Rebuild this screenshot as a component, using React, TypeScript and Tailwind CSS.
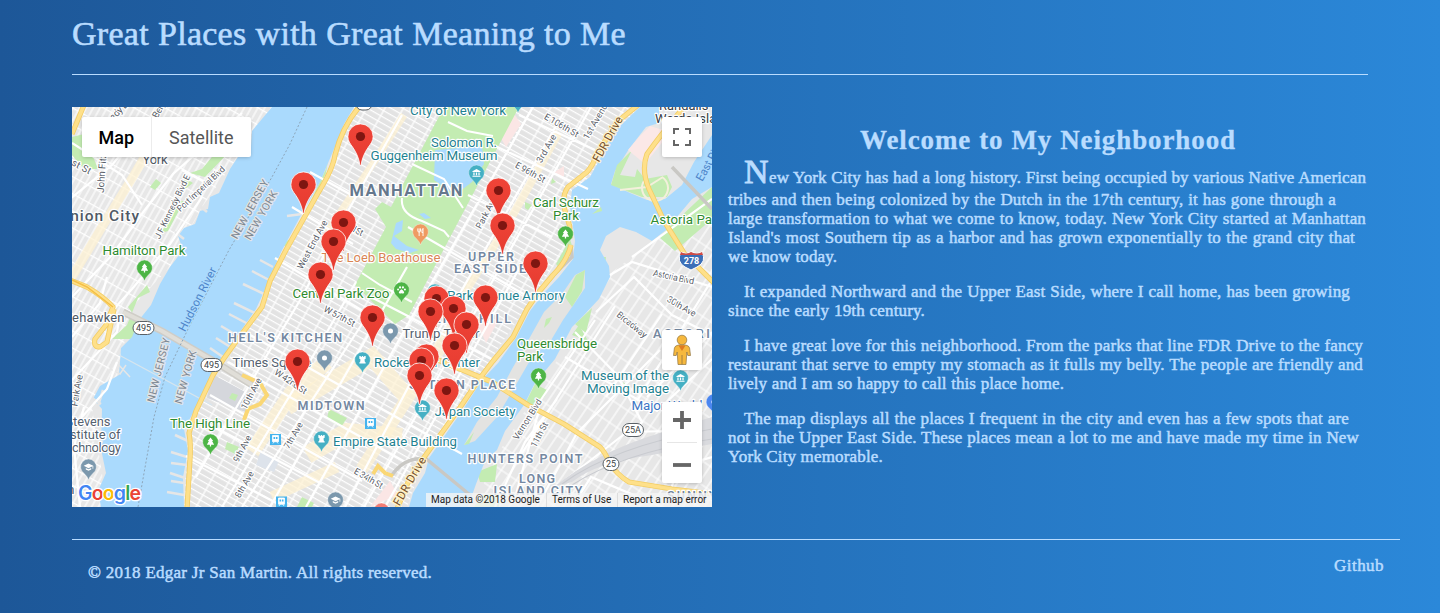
import React from "react";

type LabelSpec = {
  t: string;
  x: number;
  y: number;
  w: number;
  s?: number;
  c?: string;
  r?: number;
  b?: number;
  halo?: string;
};

const TEAL = "#1f8291";
const GREEN = "#2e8b2f";
const SLATE = "#54616f";
const AREA = "#7488a1";
const ROAD = "#5a6068";

// Every label is centred on (x, y) and fitted to a width of w.
const labels: LabelSpec[] = [
  { t: "Union City", x: 27, y: 114, w: 80, s: 15.5, c: "#4f5965", b: 500 },
  { t: "West New", x: 85, y: 41, w: 60, s: 13, c: "#4f5965" },
  { t: "York", x: 83, y: 57, w: 25, s: 13, c: "#4f5965" },
  { t: "Hamilton Park", x: 72, y: 148, w: 83, s: 13.4, c: GREEN },
  { t: "41st St", x: 3, y: 60, w: 32, s: 9.8, c: ROAD, r: 28 },
  { t: "John Fitzgerald", x: 34, y: 53, w: 66, s: 9.8, c: ROAD, r: -86 },
  { t: "J F Kennedy Blvd E", x: 103, y: 101, w: 70, s: 8.8, c: ROAD, r: -64 },
  { t: "Port Imperial Blvd", x: 131, y: 84, w: 62, s: 8.8, c: ROAD, r: -43 },
  { t: "Kennedy Blvd", x: 46, y: 9, w: 54, s: 9.5, c: ROAD, r: -45 },
  { t: "Bergenline", x: 95, y: -6, w: 40, s: 9.5, c: ROAD, r: -62 },
  { t: "NEW JERSEY", x: 181, y: 104, w: 66, s: 10.5, c: "#7c8792", r: -61, halo: "#e3e5e8" },
  { t: "NEW YORK", x: 192, y: 110, w: 55, s: 10.5, c: "#7c8792", r: -60, halo: "#e3e5e8" },
  { t: "NEW JERSEY", x: 90, y: 264, w: 66, s: 10.5, c: "#7c8792", r: -76, halo: "#e3e5e8" },
  { t: "NEW YORK", x: 117, y: 271, w: 55, s: 10.5, c: "#7c8792", r: -74, halo: "#e3e5e8" },
  { t: "Hudson River", x: 129, y: 194, w: 70, s: 11.5, c: "#4d84c9", r: -63, halo: "#aadafd" },
  { t: "Weehawken", x: 17, y: 215, w: 71, s: 13, c: "#4f5965" },
  { t: "Park Ave", x: 8, y: 284, w: 32, s: 9.5, c: ROAD, r: -80 },
  { t: "Stevens", x: 16, y: 319, w: 45, s: 13, c: SLATE },
  { t: "Institute of", x: 18, y: 332, w: 61, s: 13, c: SLATE },
  { t: "Technology", x: 18, y: 345, w: 62, s: 13, c: SLATE },
  { t: "Hoboken", x: -22, y: 387, w: 49, s: 13, c: "#4f5965" },
  { t: "The High Line", x: 138, y: 321, w: 80, s: 13.4, c: GREEN },
  { t: "HELL'S KITCHEN", x: 213, y: 235, w: 114, s: 12.5, c: AREA, b: 600 },
  { t: "Times Square", x: 200, y: 260, w: 79, s: 13.2, c: SLATE },
  { t: "W 42nd St", x: 217, y: 277, w: 37, s: 9, c: ROAD, r: 34 },
  { t: "W 57th St", x: 266, y: 212, w: 34, s: 9, c: ROAD, r: 28 },
  { t: "10th Ave", x: 182, y: 288, w: 34, s: 9, c: ROAD, r: -62 },
  { t: "9th Ave", x: 173, y: 343, w: 29, s: 9, c: ROAD, r: -62 },
  { t: "8th Ave", x: 175, y: 379, w: 29, s: 9, c: ROAD, r: -60 },
  { t: "7th Ave", x: 224, y: 330, w: 29, s: 9, c: ROAD, r: -60 },
  { t: "West End Ave", x: 243, y: 139, w: 54, s: 9, c: ROAD, r: -62 },
  { t: "W 72nd St", x: 274, y: 121, w: 35, s: 9, c: ROAD, r: 28 },
  { t: "MIDTOWN", x: 259, y: 303, w: 67, s: 12.5, c: AREA, b: 600 },
  { t: "Empire State Building", x: 323, y: 339, w: 124, s: 13.2, c: TEAL },
  { t: "Rockefeller Center", x: 355, y: 260, w: 106, s: 13.2, c: TEAL },
  { t: "Trump Tower", x: 369, y: 231, w: 77, s: 13.2, c: SLATE },
  { t: "Japan Society", x: 403, y: 309, w: 81, s: 13.2, c: TEAL },
  { t: "SUTTON PLACE", x: 390, y: 282, w: 106, s: 12.5, c: AREA, b: 600 },
  { t: "LENOX HILL", x: 396, y: 216, w: 86, s: 12.5, c: AREA, b: 600 },
  { t: "E 34th St", x: 295, y: 374, w: 32, s: 9, c: ROAD, r: 30 },
  { t: "FDR Drive", x: 341, y: 376, w: 54, s: 11.5, c: "#75502b", r: -60, halo: "#fff2cb" },
  { t: "MANHATTAN", x: 334, y: 89, w: 113, s: 16.5, c: "#65788d", b: 700 },
  { t: "City of New York", x: 386, y: 8, w: 96, s: 13.4, c: TEAL },
  { t: "Solomon R.", x: 392, y: 40, w: 66, s: 13.4, c: TEAL },
  { t: "Guggenheim Museum", x: 362, y: 53, w: 127, s: 13.4, c: TEAL },
  { t: "The Loeb Boathouse", x: 309, y: 155, w: 119, s: 13.2, c: "#d98555" },
  { t: "Central Park Zoo", x: 269, y: 191, w: 97, s: 13.4, c: GREEN },
  { t: "Park Avenue Armory", x: 434, y: 193, w: 118, s: 13.2, c: TEAL },
  { t: "UPPER", x: 419, y: 154, w: 46, s: 12.5, c: AREA, b: 600 },
  { t: "EAST SIDE", x: 418, y: 166, w: 72, s: 12.5, c: AREA, b: 600 },
  { t: "Park Ave", x: 417, y: 107, w: 35, s: 9, c: ROAD, r: -62 },
  { t: "3rd Ave", x: 477, y: 43, w: 31, s: 9, c: ROAD, r: -60 },
  { t: "1st Avenue", x: 527, y: 14, w: 44, s: 9, c: ROAD, r: -60 },
  { t: "E 106th St", x: 488, y: 21, w: 38, s: 9, c: ROAD, r: 30 },
  { t: "E 96th St", x: 457, y: 68, w: 33, s: 9, c: ROAD, r: 29 },
  { t: "FDR Drive", x: 539, y: 34, w: 50, s: 11.5, c: "#75502b", r: -61, halo: "#fff2cb" },
  { t: "Carl Schurz", x: 494, y: 100, w: 66, s: 13.4, c: GREEN },
  { t: "Park", x: 494, y: 113, w: 26, s: 13.4, c: GREEN },
  { t: "Randalls and", x: 624, y: 3, w: 74, s: 13, c: "#383d44" },
  { t: "Wards Island", x: 621, y: 16, w: 76, s: 13, c: "#383d44" },
  { t: "Astoria Park", x: 615, y: 117, w: 73, s: 13.4, c: GREEN },
  { t: "East River", x: 642, y: 54, w: 48, s: 11.5, c: "#4d84c9", r: -61, halo: "#aadafd" },
  { t: "Astoria Blvd", x: 601, y: 173, w: 42, s: 9, c: ROAD, r: 12 },
  { t: "30th Ave", x: 608, y: 202, w: 32, s: 9, c: ROAD, r: 30 },
  { t: "Broadway", x: 558, y: 220, w: 36, s: 9, c: ROAD, r: 39 },
  { t: "ASTORIA", x: 615, y: 231, w: 68, s: 12.5, c: AREA, b: 600 },
  { t: "Queensbridge", x: 485, y: 241, w: 80, s: 13.4, c: GREEN },
  { t: "Park", x: 458, y: 254, w: 26, s: 13.4, c: GREEN },
  { t: "Museum of the", x: 553, y: 273, w: 88, s: 13.4, c: TEAL },
  { t: "Moving Image", x: 556, y: 286, w: 82, s: 13.4, c: TEAL },
  { t: "Major World", x: 595, y: 303, w: 71, s: 13.4, c: "#3c74c4" },
  { t: "Vernon Blvd", x: 458, y: 314, w: 46, s: 9, c: ROAD, r: -58 },
  { t: "11th St", x: 470, y: 329, w: 27, s: 9, c: ROAD, r: -62 },
  { t: "HUNTERS POINT", x: 453, y: 356, w: 115, s: 12.5, c: AREA, b: 600 },
  { t: "LONG", x: 465, y: 376, w: 36, s: 12.5, c: AREA, b: 600 },
  { t: "ISLAND CITY", x: 466, y: 388, w: 89, s: 12.5, c: AREA, b: 600 },
  { t: "SUNNYSIDE", x: 637, y: 393, w: 84, s: 12.5, c: AREA, b: 600 },
];

function Label({ t, x, y, w, s = 12, c, r = 0, b = 400, halo = "#ffffff" }: LabelSpec) {
  return (
    <text
      transform={`translate(${x} ${y}) rotate(${r})`}
      textAnchor="middle"
      textLength={w}
      fontSize={s}
      fontWeight={b}
      fill={c}
      stroke={halo}
      strokeWidth={2.4}
      strokeLinejoin="round"
      paintOrder="stroke"
    >
      {t}
    </text>
  );
}

type Glyph = "tree" | "museum" | "castle" | "dot" | "food" | "paw" | "cap" | "none";

function GlyphMark({ k }: { k: Glyph }) {
  switch (k) {
    case "tree":
      return <path d="M0-5 3-1H1.8L4 3H.7V5H-.7V3H-4L-1.8-1H-3Z" fill="#fff" />;
    case "museum":
      return (
        <path d="M0-4.5 4.5-2V-1H-4.5V-2ZM-3.5-.5h1.4v3h-1.4ZM-.7-.5H.7v3H-.7ZM2.1-.5h1.4v3H2.1ZM-4.5 3h9v1.2h-9Z" fill="#fff" />
      );
    case "castle":
      return <path d="M-3.5-4.5h1.6v1.2h1.1v-1.2H.8v1.2h1.1v-1.2h1.6v3L2.2-.6 2.7 2.5H3.5V4h-7V2.5h.8L-2.2-.6-3.5-1.5Z" fill="#fff" />;
    case "food":
      return <path d="M-3-4v3q0 1 1.5 1Q0 0 0-1v-3M-1.5-4V4.5M2.8 4.5V-4Q1.3-3 1.5.6h1.3" fill="none" stroke="#fff" strokeWidth="1" />;
    case "paw":
      return (
        <g fill="#fff">
          <path d="M0-.7Q2 .3 3 2.5 3 4.5 0 3.6-3 4.5-3 2.5-2 .3 0-.7Z" />
          <circle cx="-3.8" cy="-.6" r="1.1" />
          <circle cx="-1.6" cy="-2.9" r="1.2" />
          <circle cx="1.6" cy="-2.9" r="1.2" />
          <circle cx="3.8" cy="-.6" r="1.1" />
        </g>
      );
    case "cap":
      return <path d="M0-4 5.3-1.3V2H4.5V-.8L0 1.3-5.3-1.3ZM-3 1 0 2.4 3 1V2.8L0 4.2-3 2.8Z" fill="#fff" />;
    case "dot":
      return <circle r="2.8" fill="#fff" />;
    default:
      return null;
  }
}

const places: { x: number; y: number; c: string; k: Glyph }[] = [
  { x: 72.5, y: 161, c: "#4db546", k: "tree" },
  { x: 138.5, y: 335, c: "#4db546", k: "tree" },
  { x: 493.5, y: 127, c: "#4db546", k: "tree" },
  { x: 466.5, y: 269, c: "#4db546", k: "tree" },
  { x: 329.5, y: 183, c: "#4db546", k: "paw" },
  { x: 348.5, y: 125, c: "#ef9a62", k: "food" },
  { x: 404.5, y: 66, c: "#45b0c4", k: "museum" },
  { x: 446, y: -7, c: "#45b0c4", k: "museum" },
  { x: 363, y: 185, c: "#45b0c4", k: "museum" },
  { x: 350.5, y: 301, c: "#45b0c4", k: "museum" },
  { x: 608.5, y: 271, c: "#45b0c4", k: "museum" },
  { x: 290.5, y: 253, c: "#45b0c4", k: "castle" },
  { x: 249.5, y: 332, c: "#45b0c4", k: "castle" },
  { x: 252.5, y: 251, c: "#7b98ad", k: "dot" },
  { x: 318.5, y: 224, c: "#7b98ad", k: "dot" },
  { x: 16.5, y: 360, c: "#7b98ad", k: "cap" },
  { x: 263.5, y: 393, c: "#7b98ad", k: "cap" },
  { x: 309.5, y: 404, c: "#f07c74", k: "none" },
  { x: 642, y: 295, c: "#4a86f0", k: "dot" },
];

const pins: [number, number][] = [
  [288.5, 29.5],
  [231.5, 77.5],
  [426.5, 83.5],
  [271.5, 115.5],
  [430.5, 118.5],
  [261.5, 134.5],
  [463.5, 156.5],
  [248.5, 167.5],
  [413.5, 190.5],
  [364.5, 191.5],
  [381.5, 201.5],
  [358.5, 204.5],
  [300.5, 210.5],
  [394.5, 217.5],
  [382.5, 238.5],
  [354.5, 249.5],
  [349.5, 253.5],
  [225.5, 254.5],
  [347.5, 268.5],
  [374.5, 283.5],
];

const shields: [number, number, string][] = [
  [71.5, 221, "495"],
  [139.5, 258, "495"],
  [561, 323, "25A"],
  [539, 357, "25"],
];

const stations: [number, number][] = [
  [203.5, 332.5],
  [298.5, 316.5],
  [209.5, 395],
];

const freeways = [
  "M115 402 118 352Q119 336 117 326L124 304 141 268Q151 252 166 232L190 200 198 174 214 143 246 86Q261 62 263 48 270 20 287 0",
  "M325 402 337 373 353 349 387 302 408 271 421 254 441 230 455 202 466 186 481 168Q495 154 499 138",
  "M498 131Q499 120 495 110 488 91 496 80L515 65Q522 57 524 48L545 15 566-2",
  "M612 0Q590 26 575 47 569 63 577 82L592 114 612 146 642 176",
  "M356 249 420 275 456 298 492 317 528 340Q533 345 537 355 545 368 557 375L600 382 642 387",
  "M-2 173 15 180Q32 190 41 200L34 218 23 232Q21 240 28 240L35 235 42 202",
  "M12-2 0 27",
];

const majorStreets =
  "M-2 92 40 58 88 0M0 190 40 148 72 104 101 67 170 6M0 36 50 68 70 98M110 63 138 78M42 202 60 182 98 137 130 90M0 230 28 196 35 170M0 273 45 225 48 207M10 310 35 282 45 255M8 400 2 340 12 300M124 370 189 258 230 190 267 120 330 8M150 400 220 285 284 175M170 400 292 214M198 400 335 160M234 400 337 215 461 0M273 400 360 235 492 5M292 400 403 205 519 0M313 400 385 272 448 160M238 65 283 90M220 100 281 137M203 151 291 204M173 225 390 347M156 255 335 356M138 288 290 374M299 190 423 254M336 120 455 189M396 88 480 130M421 38 516 82M447 8 523 43M129 313 250 377M114 349 220 404M538 168 560 155 640 180M524 205 562 170 600 208 640 228M503 225 545 268 570 315 554 330M493 250 585 304 640 252M462 303 500 247 523 213M445 354 492 280 543 199M423 400 453 335 485 292M465 400 505 326 588 243M484 380 555 325 640 323M500 400 519 370 590 400M590 207 534 290M638 176 565 294M596 392 606 360 640 350M560 150 640 92M575 290 640 225M443 391 467 303";

function BaseMap() {
  return (
    <svg className="block h-[400px] w-[640px] font-['Roboto',sans-serif]" viewBox="0 0 640 400">
      <defs>
        <pattern id="manhattan" width="16" height="5.8" patternUnits="userSpaceOnUse" patternTransform="rotate(29.5)">
          <rect width="16" height="5.8" fill="#e3e3e3" />
          <path d="M0 .6H16M1 0V6" stroke="#fff" strokeWidth="1.3" />
        </pattern>
        <pattern id="jersey" width="6" height="15" patternUnits="userSpaceOnUse" patternTransform="rotate(29)">
          <rect width="6" height="15" fill="#e7e7e7" />
          <path d="M0 .6H6M1 0V15" stroke="#fff" strokeWidth="1.2" />
        </pattern>
        <pattern id="queens" width="9" height="20" patternUnits="userSpaceOnUse" patternTransform="rotate(34)">
          <rect width="9" height="20" fill="#e7e7e7" />
          <path d="M0 1H9M1 0V20" stroke="#fff" strokeWidth="1.2" />
        </pattern>
        <linearGradient id="beak" x1="0" x2="0" y1="0" y2="1">
          <stop offset="0" stopColor="#f04438" />
          <stop offset="1" stopColor="#e53b30" />
        </linearGradient>
      </defs>

      <rect width="640" height="400" fill="#e7e7e7" />
      <path d="M0 0H205L180 30 130 100 98 160 60 200 45 270 20 300 35 400H0Z" fill="url(#jersey)" />
      <path d="M282 0H566L520 65 498 135 353 350 335 400H112L116 322 187 200 262 50Z" fill="url(#manhattan)" />
      <path d="M640 85 600 120 540 165 500 230 430 340 400 400H640Z" fill="url(#queens)" />

      {/* Commercial corridors */}
      <g stroke="#fdf1d3" strokeOpacity=".75" fill="none">
        <path d="M0 170 30 120 62 68 90 20" strokeWidth="9" />
        <path d="M255 125 302 55 332 8" strokeWidth="7" />
        <path d="M180 345 220 285 255 255" strokeWidth="15" />
        <path d="M215 300 300 250 335 290" strokeWidth="17" />
        <path d="M235 348 275 325 330 330" strokeWidth="18" />
        <path d="M290 362 350 268 385 215" strokeWidth="13" />
        <path d="M390 190 437 115 487 25" strokeWidth="8" />
        <path d="M200 390 265 360" strokeWidth="11" />
      </g>
      <path d="M427 28 441 5 449 17 434 40ZM481 66 492 59 492 70ZM405 215 427 212 414 236ZM298 400 318 374 326 388Z" fill="#fbe6e5" />
      <path d="M140 267 177 287 176 306 135 291Z" fill="#d5d7dc" />
      <path d="M189 344 207 354 202 365 184 358Z" fill="#dde3eb" />

      {/* Parks */}
      <g fill="#c3ecb2">
        <path d="M372 0H447L337 208 323 217 283 178 314 120 303 102 310 95 319 100Z" />
        <path d="M0 30 12 27 26 62 12 62 0 48ZM118 66 133 70 157 45 150 38 130 62ZM84 72 89 76 83 83 78 80ZM113 71 121 76 113 82 109 78ZM106 94 112 94 96 124 89 126ZM66 191 78 185 75 178 56 200 65 212 63 232 40 232 55 218Z" />
        <path d="M209 138 222 129 254 62 258 40 254 66 234 107 217 140ZM257 302 275 311 269 320 255 312ZM160 286 166 288 163 294 157 291ZM155 335 167 340 163 347 153 342ZM230 390 242 396 240 400H225Z" />
        <path d="M498 132 501 142 489 163 484 157ZM453 95 460 98 456 103 453 101ZM480 71 484 75 479 77Z" />
        <path d="M529 150 534 150 533 158 526 158ZM453 297 463 277 475 283 473 289 460 304ZM587 130 640 80V112L603 144ZM503 217 520 201 514 226ZM405 365 425 357 423 375 408 375ZM410 388 428 387 427 400H402Z" />
        <path d="M551 275 558 280 555 285ZM500 228 516 234 507 218Z" />
      </g>
      <path d="M363 43 410 39 412 57 400 75 383 88 362 73ZM347 107 352 106 359 111 353 112ZM331 113 330 124 322 129 335 139 347 143 338 146 324 142 319 136 324 116Z" fill="#aadafd" />
      <g fill="none" stroke="#fff" strokeWidth="2">
        <path d="M340 57 372 72 391 101M330 91Q328 107 350 114L372 124 377 130M290 166 308 178 340 195M376 15 395 24 421 29" />
      </g>

      {/* Rivers */}
      <path
        d="M200 0 180 24 179 40 168 47 158 62 147 86 138 90 136 102 128 104 123 117 112 121 106 129 111 143 98 160 88 177 79 198 67 213 60 230 49 241 47 268 28 279 21 292 30 302 29 342 34 366 26 384 29 400H112L111 370 116 344 112 322 125 299 141 266 153 249 168 225 184 202 196 176 209 145 228 110 248 75 262 42 272 17 282 0Z"
        fill="#aadafd"
      />
      <path
        d="M568 0H587V16L574 20 557 42 543 64 539 77 558 86 575 93 593 92 610 78 622 55 640 28V80L620 92 594 123 580 134 564 125 548 120 534 129 528 143 537 159 538 170 527 192 512 208 500 220 483 252 463 276 452 298 433 324 425 343 413 354 404 377 396 400H337L341 386 353 366 357 351 390 304 410 273 426 256 444 231 458 204 471 187 487 170 501 152 503 134 498 100 500 83 518 70 528 52 544 23Z"
        fill="#aadafd"
      />
      <path d="M513 163 503 168 490 187 472 205 457 232 440 262 425 290 405 315 392 338 403 334 425 310 445 276 460 250 478 235 491 213 500 200 513 181Z" fill="#e3e3e1" />
      <path d="M513 163 504 168 493 190 500 200 510 184ZM472 221 477 216 480 210 474 212ZM402 325 392 338 397 337ZM520 107 529 100 530 104ZM560 43 545 58 539 78 570 90 595 90 600 80 595 68 573 72 565 62 563 70 548 68Z" fill="#c3ecb2" />
      <path d="M567 30 578 19 591 23 596 28 573 57 556 43Z" fill="#fbe8e7" />
      <path d="M590 70A13 13 0 1 1 572 74M548 83 575 80 591 70" fill="none" stroke="#f4f0dc" strokeWidth="2" />

      {/* Piers */}
      <g stroke="#e6e6e6" strokeWidth="2.5" fill="none">
        <path d="M188 153 201 160M180 164 199 174M171 177 192 187M162 196 187 208M157 207 180 219M149 219 171 232M144 231 160 241M138 241 151 250M215 109 230 107M128 99 135 105M103 125 112 132M103 328 116 334M99 345 115 350M99 356 115 358M98 366 113 371M99 374 112 376M95 385 112 388M29 297 20 291M20 314 31 316M21 333 31 335M31 283 25 302" />
        <path d="M44 255 58 270M41 253 38 262 48 267 54 258" strokeWidth="1.5" />
      </g>

      <path d={majorStreets} fill="none" stroke="#fff" strokeWidth="2.2" />
      <path d="M47 248 140 298" stroke="#d6e5ee" strokeWidth="1.4" />

      {/* Rail yards, tunnels and elevated roads */}
      <path d="M482 380Q525 345 588 326L640 310V337L580 348Q525 355 500 375Z" fill="#d9dade" />
      <path d="M490 377Q540 340 640 322M500 378Q550 346 640 332" fill="none" stroke="#c9cbd0" strokeWidth="1.2" />
      <path d="M51 205 90 224 140 253 180 278" fill="none" stroke="#cfcdc7" strokeWidth="7" />
      <path d="M51 205 90 224 140 253 180 278" fill="none" stroke="#e0ded8" strokeWidth="4" />
      <path d="M352 350 398 388M320 368Q333 350 352 352M499 138 500 150 474 175M600 60 640 102" fill="none" stroke="#c9c8c4" strokeWidth="3.5" />
      <path d="M170 268 188 276 195 288 188 297 176 302 172 313M301 367 306 359 313 366 321 369" fill="none" stroke="#fad775" strokeWidth="4" />

      {freeways.map((d) => (
        <path key={d} d={d} fill="none" stroke="#f3cd64" strokeWidth="5.2" strokeLinejoin="round" />
      ))}
      {freeways.map((d) => (
        <path key={d} d={d} fill="none" stroke="#fee08a" strokeWidth="3.6" strokeLinejoin="round" />
      ))}
      <path d="M0 173 15 180 41 200" stroke="#f5bf45" strokeWidth="1.5" fill="none" />

      <path d="M235 0 218 37 200 70 157 143 117 220 93 270 82 310 66 400" fill="none" stroke="#8da6ba" strokeWidth="1" strokeDasharray="2 2" />

      <rect x="284" y="-9" width="16" height="12" rx="6" fill="#fff" stroke="#596066" />
      {shields.map(([x, y, t]) => (
        <g key={`${x}-${y}`}>
          <rect x={x - (t.length > 2 ? 10.5 : 8)} y={y - 6.5} width={t.length > 2 ? 21 : 16} height="13" rx="6.5" fill="#fff" stroke="#596066" />
          <text x={x} y={y + 3.4} textAnchor="middle" fontSize="9" fill="#3a3f44">
            {t}
          </text>
        </g>
      ))}
      <path d="M609 145Q614 148 619 145 625 148 630 145 635 155 625 160L619 163 613 160Q604 155 609 145Z" transform="translate(0 -34)" fill="none" />
      <path d="M609 111Q614 114 619 111 625 114 630 111 635 121 625 126L619 129 613 126Q604 121 609 111Z" transform="translate(0 34)" fill="#3c6fb7" stroke="#fff" />
      <path d="M609 145Q614 148 619 145 625 148 630 145L631 148H608Z" fill="#d24b44" />
      <text x="619.5" y="157" textAnchor="middle" fontSize="9" fontWeight="700" fill="#fff">
        278
      </text>

      {labels.map((l) => (
        <Label key={`${l.t}-${l.x}-${l.y}`} {...l} />
      ))}

      {stations.map(([x, y]) => (
        <g key={`${x}-${y}`} transform={`translate(${x} ${y})`}>
          <rect x="-5.5" y="-5.5" width="11" height="11" fill="#45b4ee" />
          <path d="M-3-4H3V2.2H-3ZM-2.6 4-1.2 2.2M2.6 4 1.2 2.2" fill="#fff" stroke="#fff" strokeWidth=".8" />
          <path d="M-2-2.6H-.4V-.4H-2ZM.4-2.6H2V-.4H.4Z" fill="#45b4ee" />
        </g>
      ))}

      {places.map((p) => (
        <g key={`${p.x}-${p.y}`} transform={`translate(${p.x} ${p.y})`}>
          <path d="M0 12.8Q-1 9.5-4.3 6.4A7.8 7.8 0 1 1 4.3 6.4Q1 9.5 0 12.8Z" fill={p.c} stroke="#fff" strokeOpacity=".5" strokeWidth=".6" />
          <g transform="scale(.9)">
            <GlyphMark k={p.k} />
          </g>
        </g>
      ))}

      {pins.map(([x, y]) => (
        <g key={`${x}-${y}`} transform={`translate(${x} ${y})`}>
          <path
            d="M-.5 29C-1.6 21.5-4 16.5-7.6 11-10.6 6.8-12.6 4.4-12.6 0A12.6 12.6 0 0 1 12.6 0C12.6 4.4 10.6 6.8 7.6 11 4 16.5 1.6 21.5 .5 29Z"
            fill="url(#beak)"
            stroke="#fff"
            strokeWidth=".8"
          />
          <circle r="4.6" fill="#7e1611" />
        </g>
      ))}
    </svg>
  );
}

function Pegman() {
  return (
    <svg className="h-8 w-6" viewBox="0 0 24 32">
      <g fill="#f6b83d" stroke="#8f7442" strokeWidth=".7">
        <path d="M8.5 11H15.5Q19 11.5 19.6 14L20.5 21.5H17.8L16.8 18 16 30.5H8L7.2 18 6.2 21.5H3.5L4.4 14Q5 11.5 8.5 11Z" />
        <circle cx="12" cy="6" r="4.8" />
      </g>
      <path d="M8.5 11.4H15.5L12 17Z" fill="#e07a20" />
      <path d="M12 21V30.5" stroke="#8f7442" strokeWidth=".8" />
    </svg>
  );
}

function MapPanel() {
  return (
    <div className="relative h-[400px] w-[640px] shrink-0 overflow-hidden bg-[#e7e7e7] font-['Roboto',sans-serif]">
      <BaseMap />

      <div className="absolute top-2.5 left-2.5 flex h-10 rounded-xs bg-white text-[18px] shadow-[0_1px_4px_-1px_rgba(0,0,0,0.3)]">
        <button className="w-[69.5px] border-r border-[#ececec] font-medium text-black">Map</button>
        <button className="w-[99.5px] text-[#565656]">Satellite</button>
      </div>

      <div className="absolute top-2.5 right-2.5 flex size-10 items-center justify-center rounded-xs bg-white shadow-[0_1px_4px_-1px_rgba(0,0,0,0.3)]">
        <svg className="size-[18px]" viewBox="0 0 18 18" fill="none" stroke="#666" strokeWidth="2">
          <path d="M1 6V1H6M12 1H17V6M17 12V17H12M6 17H1V12" />
        </svg>
      </div>

      <div className="absolute top-[223px] right-2.5 flex size-10 items-center justify-center rounded-xs bg-white shadow-[0_1px_4px_-1px_rgba(0,0,0,0.3)]">
        <Pegman />
      </div>

      <div className="absolute top-[295px] right-2.5 flex h-[81px] w-10 flex-col items-center rounded-xs bg-white shadow-[0_1px_4px_-1px_rgba(0,0,0,0.3)]">
        <svg className="h-10 w-[18px]" viewBox="0 0 18 40" stroke="#666" strokeWidth="3.8">
          <path d="M0 18H18M9 9V27" />
        </svg>
        <div className="h-px w-[30px] bg-[#e6e6e6]" />
        <svg className="h-10 w-[18px]" viewBox="0 0 18 40" stroke="#666" strokeWidth="3.8">
          <path d="M0 22H18" />
        </svg>
      </div>

      <svg className="absolute bottom-0 left-1 h-7 w-[68px] font-['Inter',sans-serif]" viewBox="0 0 68 28">
        <text x="2" y="21" fontSize="19.5" fontWeight="600" textLength="63" stroke="#fff" strokeWidth="2.5" strokeLinejoin="round" paintOrder="stroke">
          <tspan fill="#4285f4">G</tspan>
          <tspan fill="#ea4335">o</tspan>
          <tspan fill="#fbbc05">o</tspan>
          <tspan fill="#4285f4">g</tspan>
          <tspan fill="#34a853">l</tspan>
          <tspan fill="#ea4335">e</tspan>
        </text>
      </svg>

      <div className="absolute right-0 bottom-0 flex h-3.5 items-center bg-[#f5f5f5]/80 text-[10px] leading-[14px] whitespace-nowrap text-[#222]">
        <span className="w-[120px] pl-[5px]">Map data ©2018 Google</span>
        <span className="w-[71px] border-l border-[#ddd] pl-[5px]">Terms of Use</span>
        <span className="w-[95px] border-l border-[#ddd] pl-[5px]">Report a map error</span>
      </div>
    </div>
  );
}

function Line({ w, indent = false, children }: { w: string; indent?: boolean; children: React.ReactNode }) {
  return (
    <span className={`block h-[19px] whitespace-nowrap [text-align-last:justify] ${indent ? "ml-4" : ""} ${w}`}>{children}</span>
  );
}

export default function App() {
  return (
    <div className="h-[613px] overflow-hidden bg-[linear-gradient(to_right,#1d5798,#2b88d9)] pl-[72px] font-['Liberation_Serif',serif] text-[#b9dcff]">
      <header className="mr-[72px] h-[75px] border-b border-[#b9dcff] pt-[13px]">
        <h1 className="w-[554px] text-[34px] leading-[42px] tracking-[0.28px] whitespace-nowrap [-webkit-text-stroke:0.6px] [text-align-last:justify]">
          Great Places with Great Meaning to Me
        </h1>
      </header>

      <main className="mt-8 flex h-[400px] gap-4">
        <MapPanel />
        <article className="w-[640px] pt-[15px] text-[17px] leading-[19px] tracking-[0.16px] [-webkit-text-stroke:0.5px]">
          <h2 className="mx-auto h-9 w-[376px] text-[27px] leading-9 font-bold tracking-[0.9px] whitespace-nowrap [-webkit-text-stroke:0.3px] [text-align-last:justify]">
            Welcome to My Neighborhood
          </h2>
          <p className="mb-4">
            <span className="-mt-[3px] ml-4 flex h-[35px] w-[622px] items-baseline whitespace-nowrap">
              <span className="w-[25px] shrink-0 text-[34px] leading-[34px] [-webkit-text-stroke:0.8px]">N</span>
              <span className="w-[597px] shrink-0 tracking-[0.1px] [text-align-last:justify]">
                ew York City has had a long history. First being occupied by various Native American
              </span>
            </span>
            <Line w="w-[608px]">tribes and then being colonized by the Dutch in the 17th century, it has gone through a</Line>
            <Line w="w-[638px]">large transformation to what we come to know, today. New York City started at Manhattan</Line>
            <Line w="w-[627px]">Island's most Southern tip as a harbor and has grown exponentially to the grand city that</Line>
            <Line w="w-[109px]">we know today.</Line>
          </p>
          <p className="mb-4">
            <Line w="w-[606px]" indent>It expanded Northward and the Upper East Side, where I call home, has been growing</Line>
            <Line w="w-[197px]">since the early 19th century.</Line>
          </p>
          <p className="mb-4">
            <Line w="w-[619px]" indent>I have great love for this neighborhood. From the parks that line FDR Drive to the fancy</Line>
            <Line w="w-[635px]">restaurant that serve to empty my stomach as it fulls my belly. The people are friendly and</Line>
            <span className="block h-[19px] w-[336px] tracking-[0.08px] whitespace-nowrap [text-align-last:justify]">
              lively and I am so happy to call this place home.
            </span>
          </p>
          <p>
            <Line w="w-[605px]" indent>The map displays all the places I frequent in the city and even has a few spots that are</Line>
            <Line w="w-[631px]">not in the Upper East Side. These places mean a lot to me and have made my time in New</Line>
            <Line w="w-[154px]">York City memorable.</Line>
          </p>
        </article>
      </main>

      <footer className="mt-8 mr-10 flex justify-between border-t border-[#b9dcff] px-4 text-[17px] leading-5 [-webkit-text-stroke:0.5px]">
        <p className="mt-[23px] w-[344px] tracking-[0.25px] whitespace-nowrap [text-align-last:justify]">© 2018 Edgar Jr San Martin. All rights reserved.</p>
        <a className="mt-4 tracking-[0.45px]">Github</a>
      </footer>
    </div>
  );
}
